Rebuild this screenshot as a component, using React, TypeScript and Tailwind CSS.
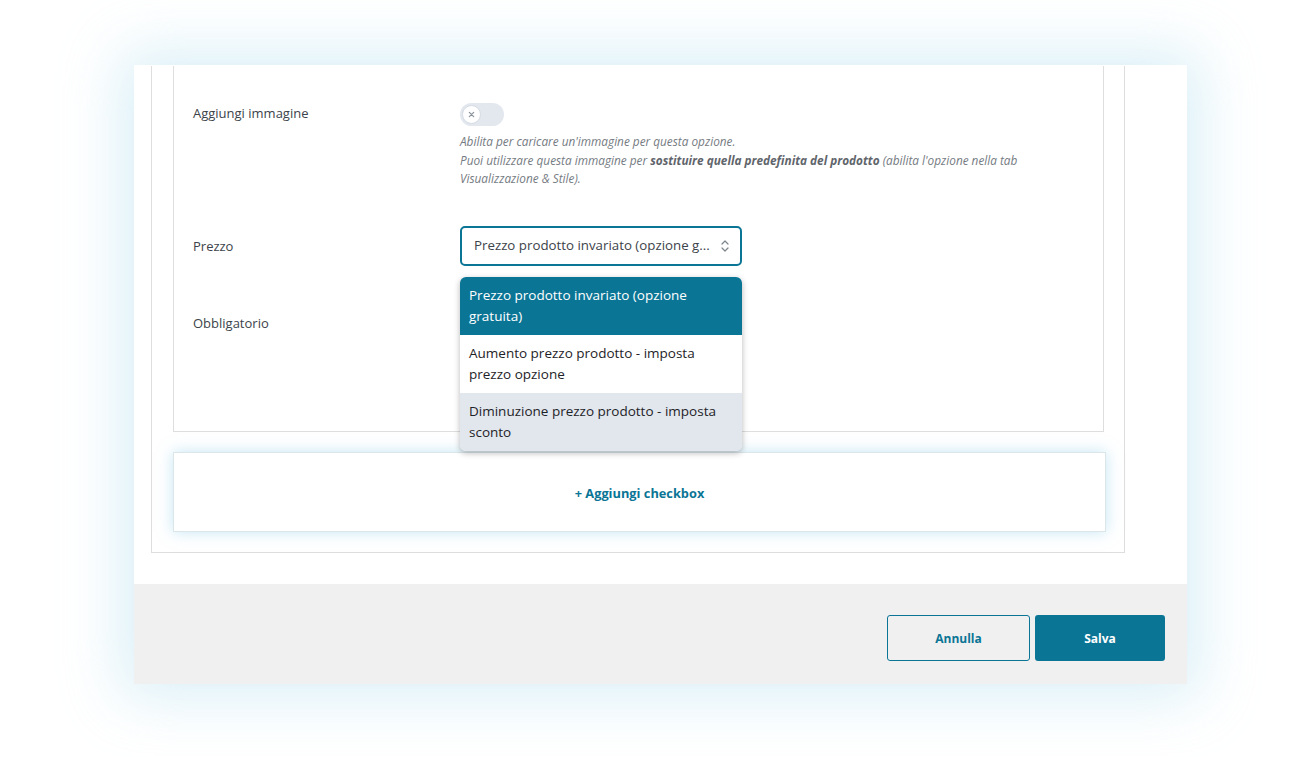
import React from "react";

function Toggle() {
  return (
    <div className="w-[44px] h-[23px] rounded-full bg-[#e3e8ef] flex items-center pl-[2px]">
      <div className="w-[19px] h-[19px] rounded-full bg-white border border-[#d5dbe3] flex items-center justify-center">
        <svg width="7" height="7" viewBox="0 0 8 8">
          <path d="M1.5 1.5 L6.5 6.5 M6.5 1.5 L1.5 6.5" stroke="#8a929c" strokeWidth="1.4" strokeLinecap="round" />
        </svg>
      </div>
    </div>
  );
}

export default function App() {
  return (
    <div
      className="w-[1300px] h-[757px] bg-white pt-[65px] overflow-hidden"
      style={{ fontFamily: '"Open Sans", "Noto Sans", sans-serif' }}
    >
      <div className="ml-[134px] w-[1053px] shadow-[0_0_55px_12px_rgba(170,220,238,0.45)]">
        {/* white content area */}
        <div className="h-[519px] bg-white overflow-hidden flex flex-col justify-end">
          <div className="ml-[17px] w-[974px] border-x border-b border-[#dedede] pb-[20px] mb-[31px] flex flex-col">
            {/* inner panel */}
            <div className="ml-[21px] w-[931px] h-[366px] border-x border-b border-[#dedede] relative">
              <div className="pt-[37px] flex flex-col">
                {/* row 1 */}
                <div className="flex">
                  <div className="w-[286px] pl-[19px] text-[13px] leading-[18px] text-[#3c434a] pt-[1px]">
                    Aggiungi immagine
                  </div>
                  <div className="flex flex-col">
                    <Toggle />
                    <div className="mt-[6px] text-[11.8px] leading-[18.5px] italic text-[#757b82] w-[570px]">
                      <div>Abilita per caricare un'immagine per questa opzione.</div>
                      <div>
                        Puoi utilizzare questa immagine per{" "}
                        <span className="font-bold text-[#5f656b]">sostituire quella predefinita del prodotto</span>{" "}
                        (abilita l'opzione nella tab Visualizzazione &amp; Stile).
                      </div>
                    </div>
                  </div>
                </div>
                {/* row 2 */}
                <div className="flex items-center mt-[38px]">
                  <div className="w-[286px] pl-[19px] text-[13px] leading-[18px] text-[#3c434a]">Prezzo</div>
                  <div className="relative">
                    <div className="w-[282px] h-[40px] rounded-[5px] border-2 border-[#0b7596] flex items-center pl-[12px] pr-[10px]">
                      <span className="flex-1 text-[13.3px] text-[#3c434a] whitespace-nowrap overflow-hidden">
                        Prezzo prodotto invariato (opzione g...
                      </span>
                      <svg width="10" height="14" viewBox="0 0 10 14" className="ml-[4px]">
                        <path d="M2 5 L5 2 L8 5 M2 9 L5 12 L8 9" fill="none" stroke="#7d848b" strokeWidth="1.2" strokeLinecap="round" strokeLinejoin="round" />
                      </svg>
                    </div>
                    {/* dropdown */}
                    <div className="absolute left-0 top-[51px] w-[282px] rounded-[6px] overflow-hidden shadow-[0_2px_6px_rgba(0,0,0,0.28)] z-10 text-[13.5px] leading-[21px]">
                      <div className="px-[9px] pt-[8px] pb-[8px] bg-[#0b7596] text-white">
                        Prezzo prodotto invariato (opzione gratuita)
                      </div>
                      <div className="px-[9px] pt-[8px] pb-[8px] bg-white text-[#1e2327]">
                        Aumento prezzo prodotto - imposta prezzo opzione
                      </div>
                      <div className="px-[9px] pt-[8px] pb-[8px] bg-[#e2e7ee] text-[#1e2327]">
                        Diminuzione prezzo prodotto - imposta sconto
                      </div>
                    </div>
                  </div>
                </div>
                {/* row 3 */}
                <div className="flex mt-[46px]">
                  <div className="w-[286px] pl-[19px] text-[13px] leading-[18px] text-[#3c434a] pt-[2px]">
                    Obbligatorio
                  </div>
                  <Toggle />
                </div>
              </div>
            </div>
            {/* add checkbox */}
            <div className="ml-[21px] mt-[20px] w-[933px] h-[80px] border border-[#dbe6ea] bg-white shadow-[0_0_14px_rgba(150,210,235,0.55)] flex items-center justify-center pt-[3px]">
              <span className="text-[12.8px] font-bold text-[#0b7596]">+ Aggiungi checkbox</span>
            </div>
          </div>
        </div>
        {/* footer */}
        <div className="h-[100px] bg-[#f0f0f0] flex items-start justify-end pt-[31px] pr-[22px] gap-[5px]">
          <button className="w-[143px] h-[46px] rounded-[3px] border border-[#0b7596] bg-transparent text-[12px] font-bold text-[#0b7596] pt-[1px]">
            Annulla
          </button>
          <button className="w-[130px] h-[46px] rounded-[3px] bg-[#0b7596] text-[12px] font-bold text-white pt-[1px]">
            Salva
          </button>
        </div>
      </div>
    </div>
  );
}
